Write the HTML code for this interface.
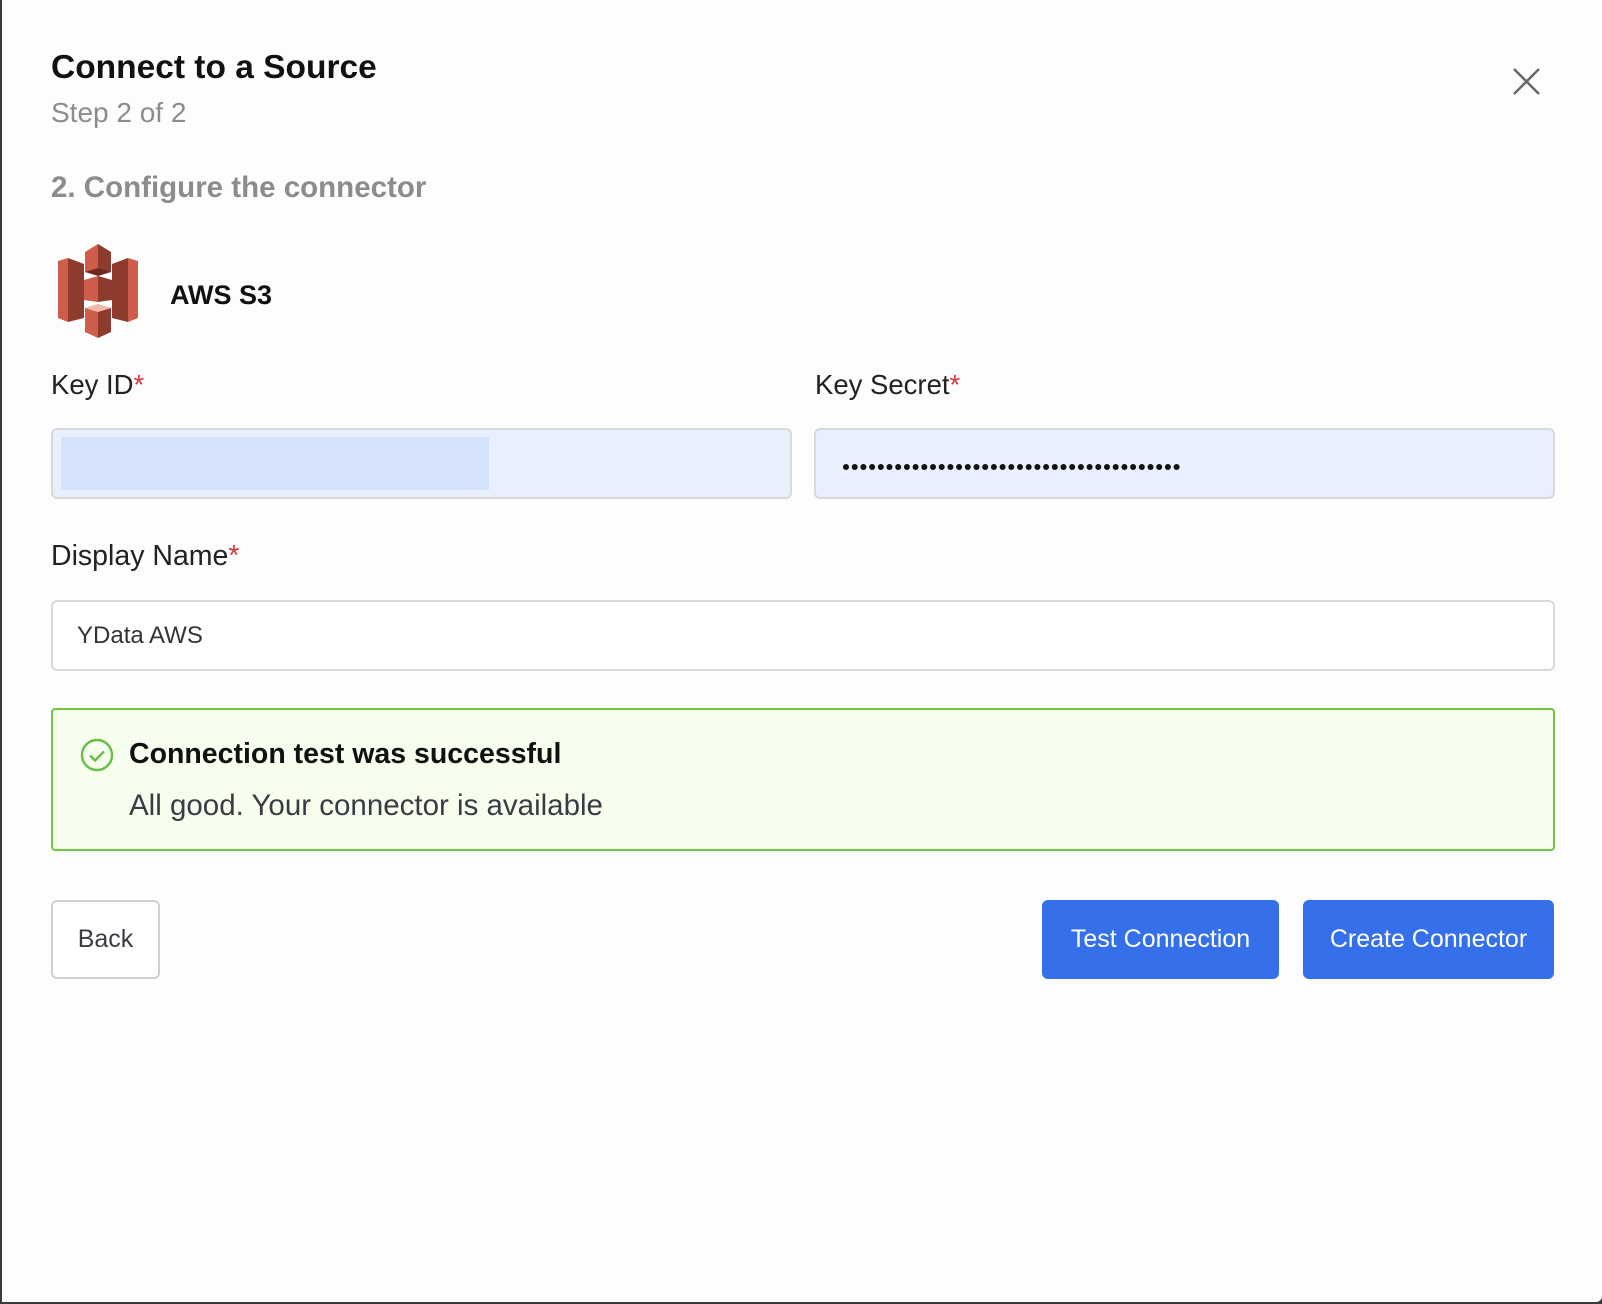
<!DOCTYPE html>
<html><head><meta charset="utf-8"><style>
*{box-sizing:border-box;margin:0;padding:0}
body{width:1602px;height:1304px;background:#3a3a3a;font-family:"Liberation Sans",sans-serif;position:relative;overflow:hidden}
.modal{position:absolute;left:2px;top:0;width:1600px;height:1302px;background:#fdfdfd;border-radius:0 0 6px 0}
.a{position:absolute;white-space:nowrap}
.inp{position:absolute;border:2px solid #d9d9d9;border-radius:6px}
.btn{position:absolute;border-radius:6px;display:flex;align-items:center;justify-content:center;font-size:25px}
.req{color:#d9363e}
</style></head><body>
<div class="modal">
<div class="a" style="left:49px;top:49px;font-size:33.5px;font-weight:bold;color:#111">Connect to a Source</div>
<div class="a" style="left:49px;top:97px;font-size:28px;color:#8c8c8c">Step 2 of 2</div>
<svg class="a" style="left:1511px;top:68px" width="27" height="27" viewBox="0 0 27 27"><path d="M1 1L26 26M26 1L1 26" stroke="#666" stroke-width="2.4"/></svg>
<div class="a" style="left:49px;top:171px;font-size:29.5px;font-weight:bold;color:#8c8c8c">2. Configure the connector</div>
<svg class="a" style="left:56px;top:244px" width="80" height="94" viewBox="0 0 80 94">
<polygon points="0,17 10,14 10,78 0,74" fill="#d05c4b"/>
<polygon points="10,14 26,20 26,74 10,78" fill="#8c3b2d"/>
<polygon points="80,17 70,14 70,78 80,74" fill="#d05c4b"/>
<polygon points="54,20 70,14 70,78 54,74" fill="#8c3b2d"/>
<polygon points="27,8 40,0 40,30 27,28" fill="#d05c4b"/>
<polygon points="40,0 53,8 53,28 40,30" fill="#8c3b2d"/>
<polygon points="27,28 40,24 53,28 40,32" fill="#6e2a20"/>
<polygon points="26,36 40,32 40,58 26,56" fill="#d05c4b"/>
<polygon points="40,32 54,36 54,56 40,58" fill="#8c3b2d"/>
<polygon points="27,64 40,60 53,64 40,68" fill="#f0b8ae"/>
<polygon points="27,64 40,68 40,94 27,88" fill="#d05c4b"/>
<polygon points="40,68 53,64 53,88 40,94" fill="#8c3b2d"/>
</svg>
<div class="a" style="left:168px;top:280px;font-size:27px;font-weight:bold;color:#111">AWS S3</div>
<div class="a" style="left:49px;top:369px;font-size:27.5px;color:#222">Key ID<span class="req">*</span></div>
<div class="a" style="left:813px;top:369px;font-size:27.5px;color:#222">Key Secret<span class="req">*</span></div>
<div class="inp" style="left:49px;top:428px;width:741px;height:71px;background:#e8f0fe"><div style="position:absolute;left:8px;top:7px;width:428px;height:53px;background:#d5e2fb"></div></div>
<div class="inp" style="left:812px;top:428px;width:741px;height:71px;background:#e8f0fe">
<svg style="position:absolute;left:27px;top:32px" width="350" height="10"><g fill="#111">
<circle cx="3" cy="5" r="3"/><circle cx="11.7" cy="5" r="3"/><circle cx="20.4" cy="5" r="3"/><circle cx="29.1" cy="5" r="3"/><circle cx="37.8" cy="5" r="3"/><circle cx="46.5" cy="5" r="3"/><circle cx="55.2" cy="5" r="3"/><circle cx="63.9" cy="5" r="3"/><circle cx="72.6" cy="5" r="3"/><circle cx="81.3" cy="5" r="3"/><circle cx="90" cy="5" r="3"/><circle cx="98.7" cy="5" r="3"/><circle cx="107.4" cy="5" r="3"/><circle cx="116.1" cy="5" r="3"/><circle cx="124.8" cy="5" r="3"/><circle cx="133.5" cy="5" r="3"/><circle cx="142.2" cy="5" r="3"/><circle cx="150.9" cy="5" r="3"/><circle cx="159.6" cy="5" r="3"/><circle cx="168.3" cy="5" r="3"/><circle cx="177" cy="5" r="3"/><circle cx="185.7" cy="5" r="3"/><circle cx="194.4" cy="5" r="3"/><circle cx="203.1" cy="5" r="3"/><circle cx="211.8" cy="5" r="3"/><circle cx="220.5" cy="5" r="3"/><circle cx="229.2" cy="5" r="3"/><circle cx="237.9" cy="5" r="3"/><circle cx="246.6" cy="5" r="3"/><circle cx="255.3" cy="5" r="3"/><circle cx="264" cy="5" r="3"/><circle cx="272.7" cy="5" r="3"/><circle cx="281.4" cy="5" r="3"/><circle cx="290.1" cy="5" r="3"/><circle cx="298.8" cy="5" r="3"/><circle cx="307.5" cy="5" r="3"/><circle cx="316.2" cy="5" r="3"/><circle cx="324.9" cy="5" r="3"/><circle cx="333.6" cy="5" r="3"/>
</g></svg></div>
<div class="a" style="left:49px;top:540px;font-size:28.5px;color:#222">Display Name<span class="req">*</span></div>
<div class="inp" style="left:49px;top:600px;width:1504px;height:71px;background:#fff"><div class="a" style="left:24px;top:20px;font-size:24px;color:#333">YData AWS</div></div>
<div class="a" style="left:49px;top:708px;width:1504px;height:143px;border:2px solid #73c543;border-radius:4px;background:#f6ffed">
<svg class="a" style="left:27px;top:28px" width="34" height="34" viewBox="0 0 34 34"><circle cx="17" cy="17" r="15" fill="none" stroke="#64bf45" stroke-width="2.4"/><path d="M10 17.5l5 5 9-9" fill="none" stroke="#64bf45" stroke-width="2.4"/></svg>
<div class="a" style="left:76px;top:28px;font-size:28.5px;font-weight:bold;color:#111">Connection test was successful</div>
<div class="a" style="left:76px;top:79px;font-size:29.5px;color:#3b3b44">All good. Your connector is available</div>
</div>
<div class="btn" style="left:49px;top:900px;width:109px;height:79px;border:2px solid #d0d0d0;background:#fff;color:#3b3b44">Back</div>
<div class="btn" style="left:1040px;top:900px;width:237px;height:79px;background:#366fea;color:#fff">Test Connection</div>
<div class="btn" style="left:1301px;top:900px;width:251px;height:79px;background:#366fea;color:#fff">Create Connector</div>
</div>
</body></html>
